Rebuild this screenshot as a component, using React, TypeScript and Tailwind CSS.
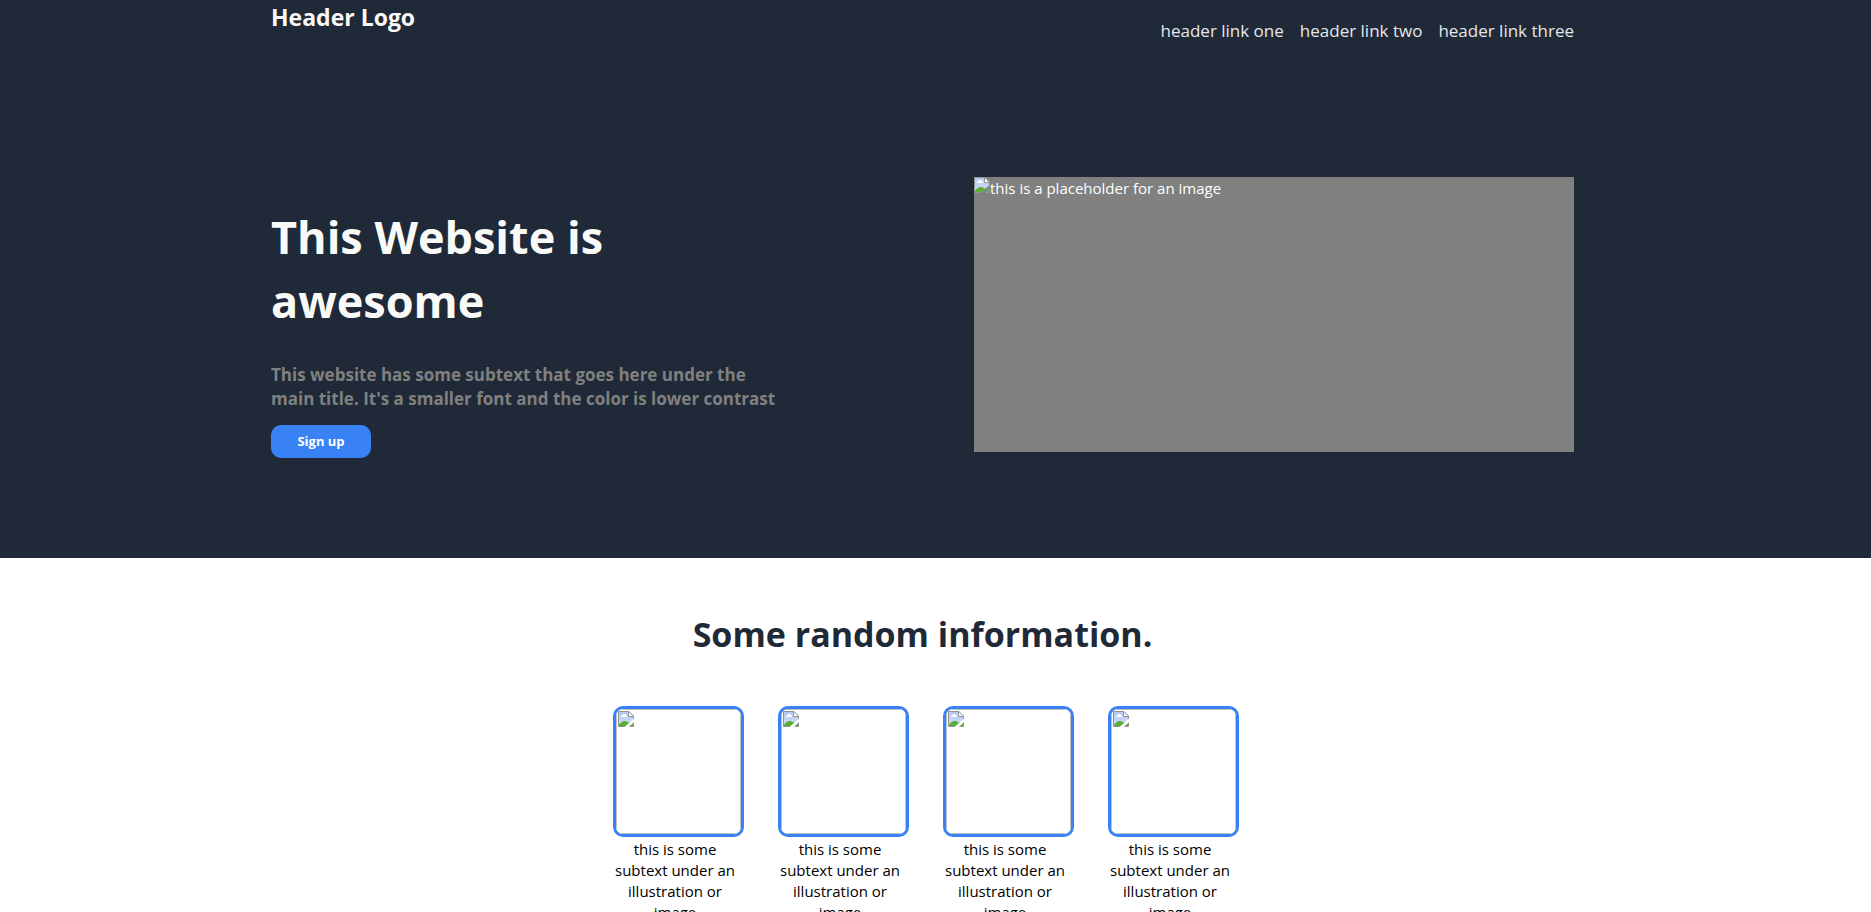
import { useId } from "react";

const links = ["header link one", "header link two", "header link three"];

const cards = [1, 2, 3, 4];

function MissingImageIcon() {
  const sky = useId();
  const torn = useId();
  return (
    <svg width="16" height="16" viewBox="0 0 16 16" aria-hidden="true" className="block shrink-0">
      <defs>
        <linearGradient id={sky} x1="0" y1="0" x2="0" y2="1">
          <stop offset="0" stopColor="#b4c8f0" />
          <stop offset="1" stopColor="#d3dff8" />
        </linearGradient>
        <clipPath id={torn}>
          <path d="M0 0H16V7.5L6.5 16H0ZM16 11V16H11Z" />
        </clipPath>
      </defs>
      <g clipPath={`url(#${torn})`}>
        <path d="M0.5 0.5H11L15.5 5V15.5H0.5Z" fill={`url(#${sky})`} />
        <path d="M3 6C2.8 4.6 4 4.2 4.6 4.3C5 2.6 7.6 2.6 7.9 4.3C9.2 4.2 9.4 6 8.4 6Z" fill="#fff" />
        <path d="M1 15V14C3.4 9.6 7.6 8.8 10.6 11.6L15 12.2V15Z" fill="#58af33" />
        <path d="M10.5 1L15 5.5H10.5Z" fill="#fff" />
        <path d="M0.5 15.5V0.5H11L15.5 5V15.5ZM10.5 0.5V5.5H15.5" fill="none" stroke="#939393" />
      </g>
    </svg>
  );
}

export default function App() {
  return (
    <div className="min-h-screen bg-white font-['Open_Sans','Noto_Sans',sans-serif]">
      <header className="flex justify-center bg-[#1f2937] pr-[26px] pb-[100px]">
        <div className="w-full max-w-[1303px]">
          <div className="flex items-start justify-between">
            <div className="text-[23px] leading-[34px] font-bold text-[#f9faf8]">Header Logo</div>
            <nav className="flex gap-4 pt-4">
              {links.map((label) => (
                <a key={label} href="#" className="text-[17px] leading-[30px] text-[#e5e7eb]">
                  {label}
                </a>
              ))}
            </nav>
          </div>
          <div className="flex items-start justify-between pt-[131px]">
            <div className="w-[510px] pt-7">
              <h1 className="max-w-[400px] text-[45px] leading-16 font-bold text-[#f9faf8]">
                This Website is awesome
              </h1>
              <p className="pt-[30px] text-[17px] leading-6 font-bold text-[#808080]">
                This website has some subtext that goes here under the main title. It's a smaller font and the color is lower contrast
              </p>
              <button
                type="button"
                className="mt-3.5 block h-[33px] w-[100px] rounded-[10px] bg-[#3882f6] text-[13px] font-bold text-white"
              >
                Sign up
              </button>
            </div>
            <div className="flex h-[275px] w-[600px] items-start bg-[#808080]">
              <MissingImageIcon />
              <span className="text-[15px] leading-[22px] text-white">this is a placeholder for an image</span>
            </div>
          </div>
        </div>
      </header>
      <main className="pt-12 pr-[26px]">
        <h2 className="text-center text-[34px] leading-14 font-bold text-[#1f2937]">
          Some random information.
        </h2>
        <div className="flex justify-center gap-10 pt-11">
          {cards.map((id) => (
            <figure key={id} className="w-[125px]">
              <div className="h-[131px] w-[131px] overflow-hidden rounded-[10px] border-3 border-[#3882f6]">
                <div className="h-full border border-[#c0c0c0] p-px">
                  <MissingImageIcon />
                </div>
              </div>
              <figcaption className="pt-0.5 text-center text-[15px] leading-[21px] text-black">
                this is some subtext under an illustration or image
              </figcaption>
            </figure>
          ))}
        </div>
      </main>
    </div>
  );
}
